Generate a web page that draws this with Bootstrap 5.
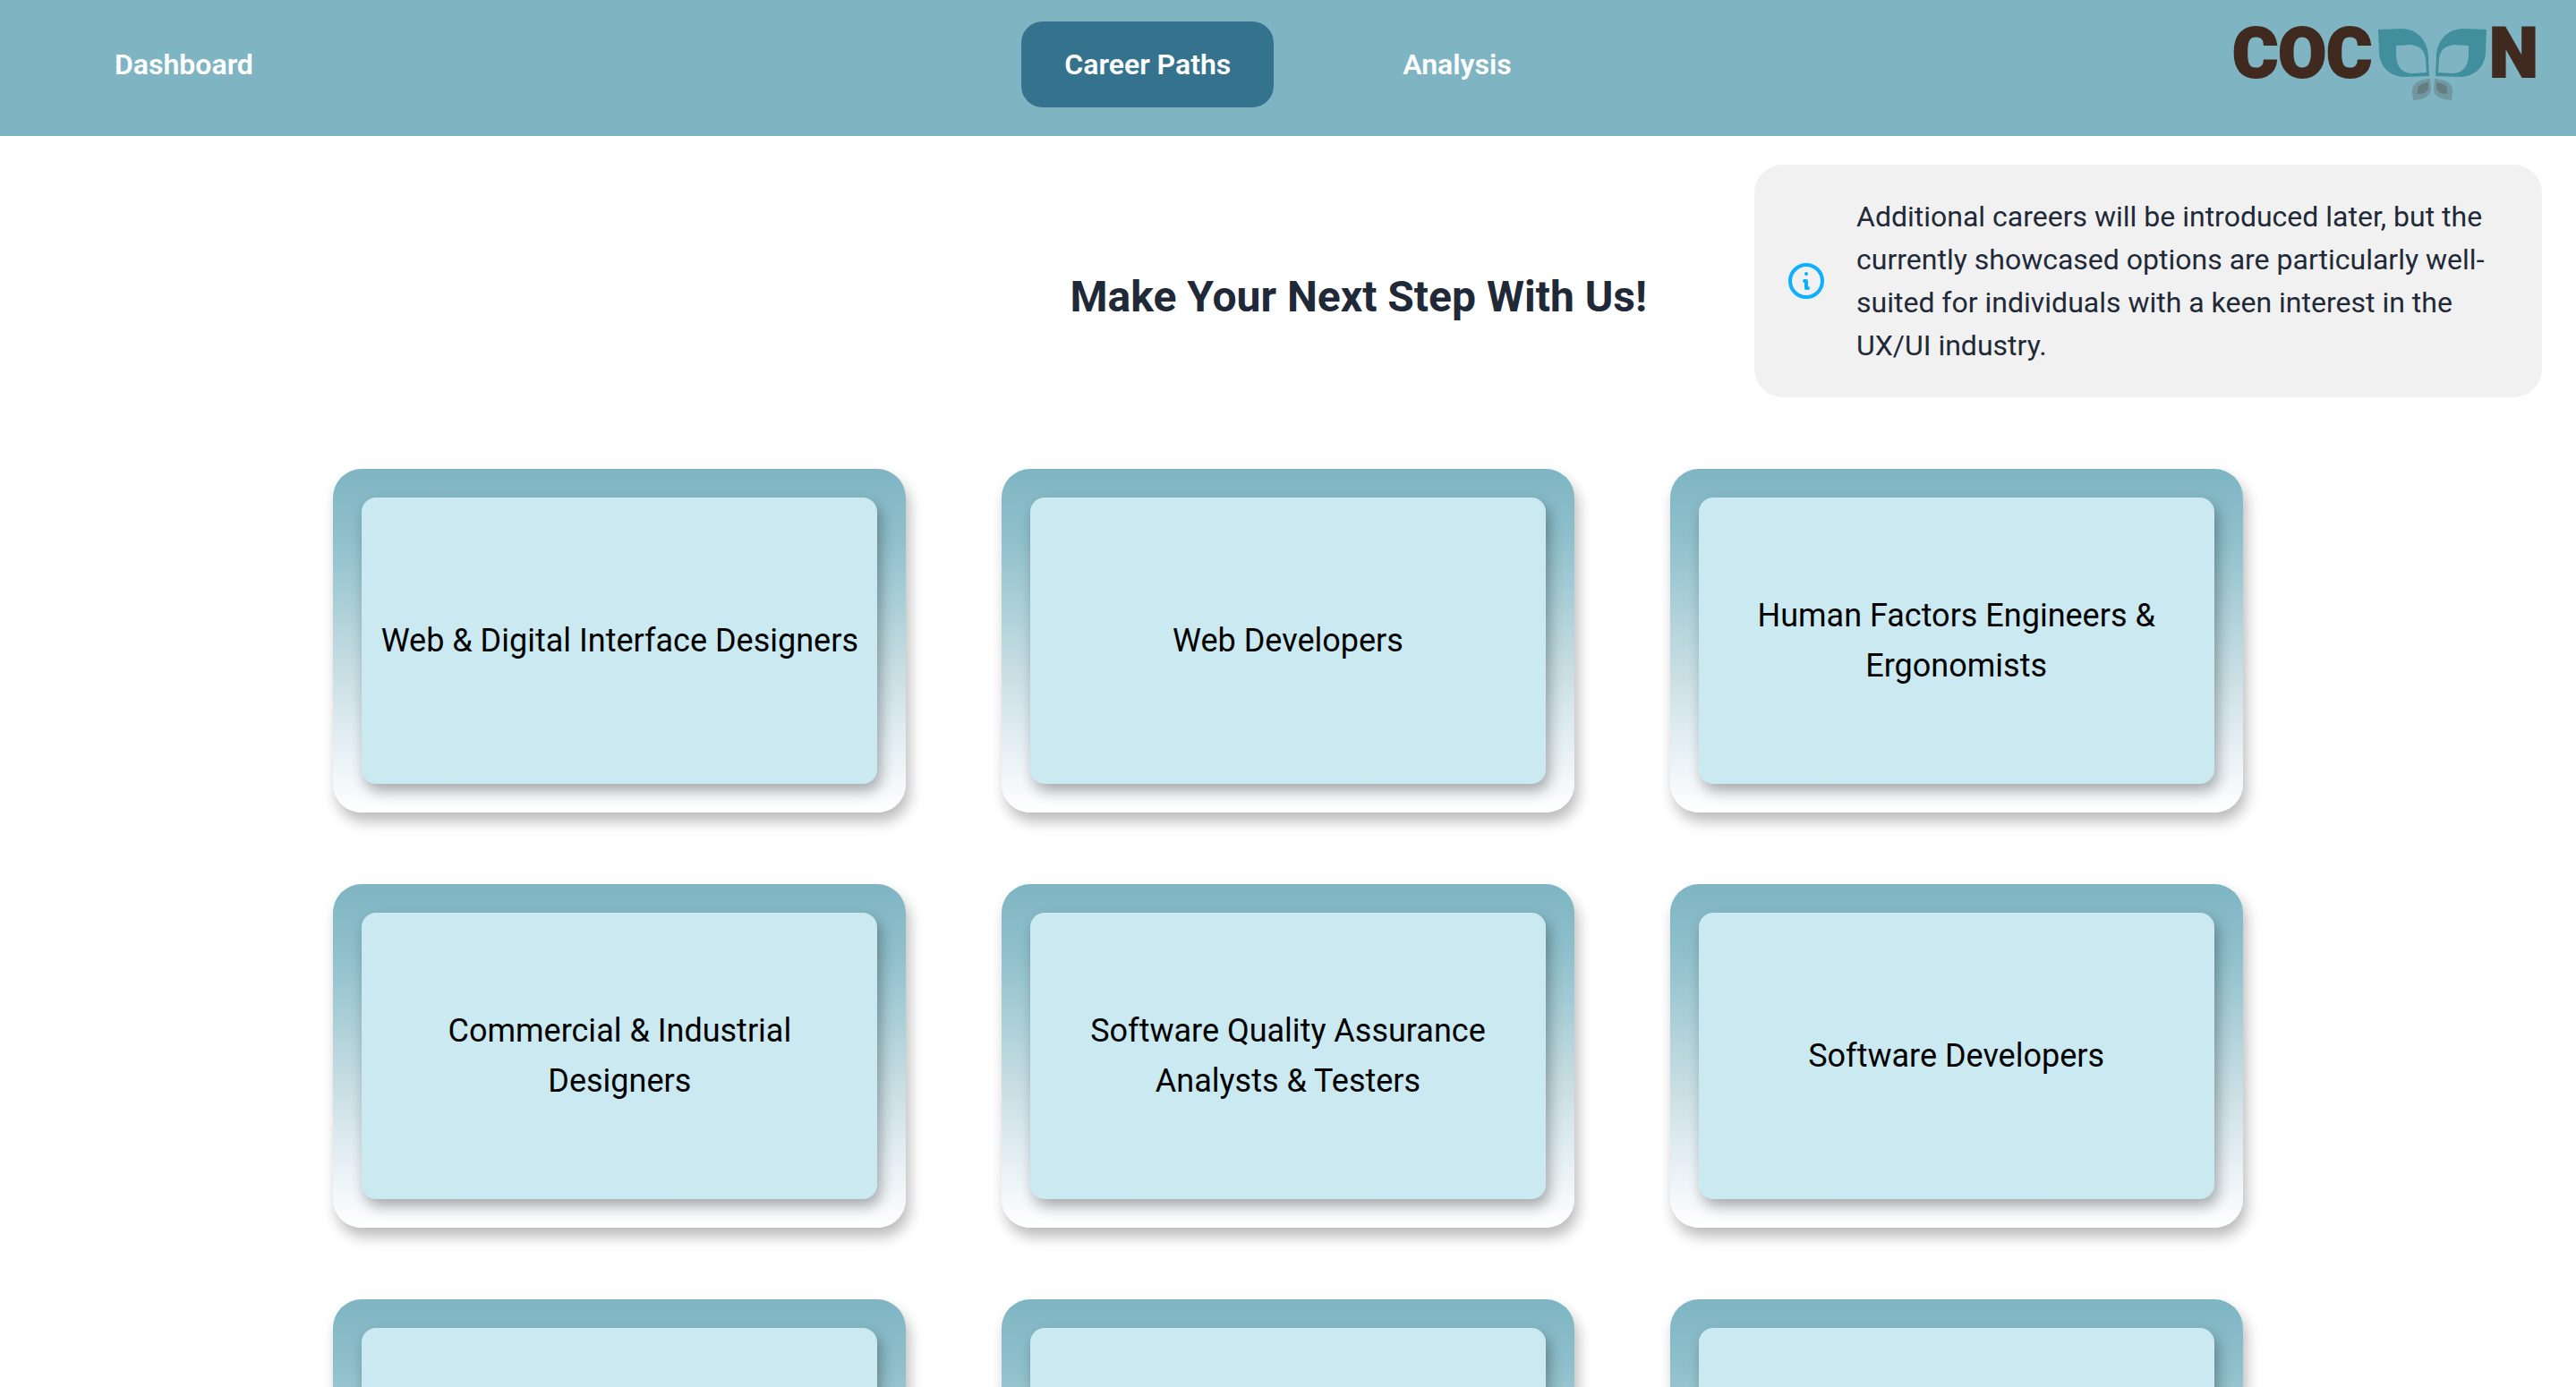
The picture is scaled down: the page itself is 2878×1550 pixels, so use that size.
<!DOCTYPE html>
<html lang="en">
<head>
<meta charset="utf-8">
<meta name="viewport" content="width=device-width, initial-scale=1">
<title>Cocoon – Career Paths</title>
<link href="https://cdn.jsdelivr.net/npm/bootstrap@5.3.0/dist/css/bootstrap.min.css" rel="stylesheet">
<style>
  body { font-family: Roboto, "Liberation Sans", sans-serif; font-size: 32px; line-height: 48px; color: #1f2937; background: #fff; }
  .site-nav { background: #7fb5c3; padding: 24px 80px 32px; }
  .site-nav .nav-link { color: #fff; font-weight: 600; font-size: 32px; line-height: 48px; padding: 24px 48px; border-radius: 24px; }
  .site-nav .nav-link.active { background: #35728e; }
  .nav-middle { gap: 96px; }
  .nav-edge { flex: 1 1 0; }
  .brand-logo { width: 344px; height: 96px; display: block; overflow: visible; margin-right: -40px; }
  .intro { gap: 120px; padding: 32px 38px 0; }
  .intro h1 { font-size: 48px; line-height: 56px; font-weight: 700; padding-top: 36px; }
  .notice { width: 880px; gap: 32px; padding: 34px; border-radius: 32px; background: #f1f1f1; }
  .notice svg { width: 48px; height: 48px; }
  .career-grid { max-width: 2240px; padding-top: 80px; row-gap: 80px; }
  .career-card { width: 640px; max-width: 100%; padding: 32px; border: 0; border-radius: 32px; background: linear-gradient(#7fb5c3, #8fc0cc 20%, #c9dfe4 60%, #deebf0 75%, #fff); box-shadow: 4px 10px 16px rgba(0,0,0,.27); }
  .career-tile { height: 320px; padding: 16px; border: 0; border-radius: 16px; background: #cbe9f1; color: #000; font-size: 36px; line-height: 56px; box-shadow: 4px 8px 16px rgba(0,0,0,.32); }
</style>
<script src="https://cdn.jsdelivr.net/npm/bootstrap@5.3.0/dist/js/bootstrap.bundle.min.js"></script>
</head>
<body>
<header>
  <nav class="site-nav d-flex align-items-center" aria-label="Main">
    <div class="nav-edge d-flex"><a class="nav-link" href="#">Dashboard</a></div>
    <div class="nav-middle d-flex">
      <a class="nav-link active" href="#" aria-current="page">Career Paths</a>
      <a class="nav-link" href="#">Analysis</a>
    </div>
    <a class="nav-edge d-flex justify-content-end" href="#" aria-label="Cocoon home">
      <svg class="brand-logo flex-shrink-0" viewBox="0 0 344 96">
        <g fill="#402a20" stroke="#402a20" stroke-width="2" font-family="Roboto, sans-serif" font-weight="900" font-size="78">
          <text x="0" y="62">COC</text>
          <text x="287" y="62">N</text>
        </g>
        <g>
          <path fill="#418f9c" fill-rule="evenodd" d="M163 9L189 8C207 8 219 22 219 40L220 61L192 62C173 61 164 47 164 34ZM183 27V36C183 51 190 58 202 58L217 57L216 42C215 31 208 27 199 26Z"/>
          <path fill="#418f9c" fill-rule="evenodd" d="M284 9L258 8C240 8 228 22 228 40L227 61L255 62C274 61 283 47 283 34ZM264 27V36C264 51 257 58 245 58L230 57L231 42C232 31 239 27 248 26Z"/>
          <path fill="#72979f" d="M221 64C208 65 200 70 201 79L202 88C215 87 222 83 222 75Z"/>
          <path fill="#647d80" d="M219 68C211 69 207 72 207 76V81C215 81 219 78 219 73Z"/>
          <path fill="#72979f" d="M226 64C239 65 247 70 246 79L245 88C232 87 225 83 225 75Z"/>
          <path fill="#647d80" d="M228 68C236 69 240 72 240 76V81C232 81 228 78 228 73Z"/>
        </g>
      </svg>
    </a>
  </nav>
</header>
<main>
  <section class="intro d-flex align-items-center justify-content-end">
    <h1 class="mb-0 text-nowrap">Make Your Next Step With Us!</h1>
    <div class="notice d-flex align-items-center" role="note">
      <svg class="flex-shrink-0" viewBox="0 0 24 24" fill="none" stroke="#0db0ff" stroke-width="2" stroke-linecap="round" stroke-linejoin="round" aria-hidden="true"><path d="M13 16h-1v-4h-1m1-4h.01M21 12a9 9 0 11-18 0 9 9 0 0118 0z"/></svg>
      <span>Additional careers will be introduced later, but the currently showcased options are particularly well-suited for individuals with a keen interest in the UX/UI industry.</span>
    </div>
  </section>
  <section class="career-grid row g-0 mx-auto row-cols-3" aria-label="Careers">
    <div class="col d-flex justify-content-center"><div class="career-card"><button type="button" class="career-tile w-100">Web &amp; Digital Interface Designers</button></div></div>
    <div class="col d-flex justify-content-center"><div class="career-card"><button type="button" class="career-tile w-100">Web Developers</button></div></div>
    <div class="col d-flex justify-content-center"><div class="career-card"><button type="button" class="career-tile w-100">Human Factors Engineers &amp; Ergonomists</button></div></div>
    <div class="col d-flex justify-content-center"><div class="career-card"><button type="button" class="career-tile w-100">Commercial &amp; Industrial Designers</button></div></div>
    <div class="col d-flex justify-content-center"><div class="career-card"><button type="button" class="career-tile w-100">Software Quality Assurance Analysts &amp; Testers</button></div></div>
    <div class="col d-flex justify-content-center"><div class="career-card"><button type="button" class="career-tile w-100">Software Developers</button></div></div>
    <div class="col d-flex justify-content-center"><div class="career-card"><button type="button" class="career-tile w-100" aria-label="Career"></button></div></div>
    <div class="col d-flex justify-content-center"><div class="career-card"><button type="button" class="career-tile w-100" aria-label="Career"></button></div></div>
    <div class="col d-flex justify-content-center"><div class="career-card"><button type="button" class="career-tile w-100" aria-label="Career"></button></div></div>
  </section>
</main>
</body>
</html>
